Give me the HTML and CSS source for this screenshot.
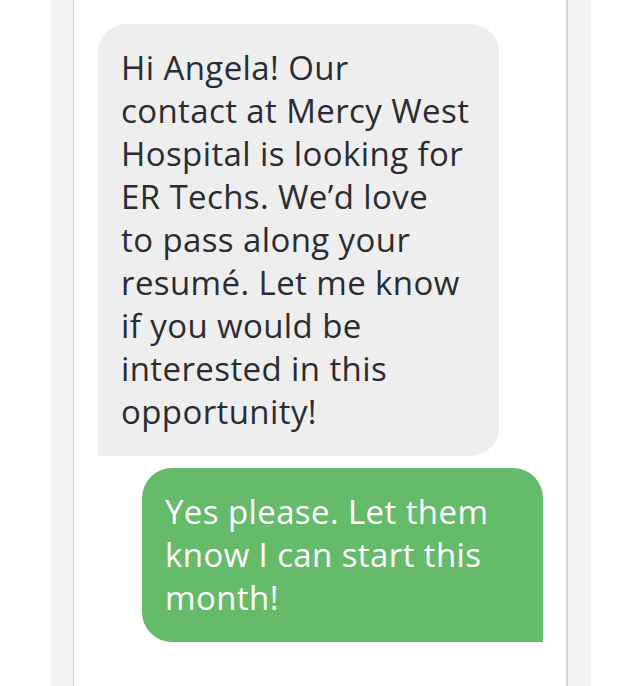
FILE: index.html
```html
<!DOCTYPE html>
<html>
<head>
<meta charset="utf-8">
<link rel="stylesheet" href="styles.css">
</head>
<body>
<div class="frame">
  <div class="screen">
    <div class="thread">
      <div class="bubble incoming">Hi Angela! Our<br>contact at Mercy West<br>Hospital is looking for<br>ER Techs. We’d love<br>to pass along your<br>resumé. Let me know<br>if you would be<br>interested in this<br>opportunity!</div>
      <div class="bubble outgoing">Yes please. Let them<br>know I can start this<br>month!</div>
    </div>
  </div>
</div>
</body>
</html>
```
FILE: styles.css
```css
html, body {
  margin: 0;
  padding: 0;
  background: #ffffff;
}
body {
  font-family: "Open Sans", "Liberation Sans", sans-serif;
  height: 686px;
  overflow: hidden;
}
.frame {
  margin-left: 51px;
  width: 540px;
  height: 686px;
  box-sizing: border-box;
  padding: 0 23px 0 22px;
  background: #f4f4f4;
}
.screen {
  height: 100%;
  background: #ffffff;
  border-left: 1px solid #cfd8dc;
  border-right: 2px solid #cfd8dc;
}
.thread {
  display: flex;
  flex-direction: column;
  gap: 12px;
  padding: 24px 23px 0 24px;
}
.bubble {
  width: 401px;
  box-sizing: border-box;
  padding: 22px 20px 23px 23px;
  font-size: 33px;
  line-height: 43px;
  letter-spacing: 0.4px;
  white-space: nowrap;
}
.incoming {
  align-self: flex-start;
  background: #eeeeee;
  color: #2a2c31;
  border-radius: 28px 28px 28px 0;
}
.outgoing {
  align-self: flex-end;
  background: #66bb6a;
  color: #ffffff;
  border-radius: 30px 30px 0 30px;
}
```
